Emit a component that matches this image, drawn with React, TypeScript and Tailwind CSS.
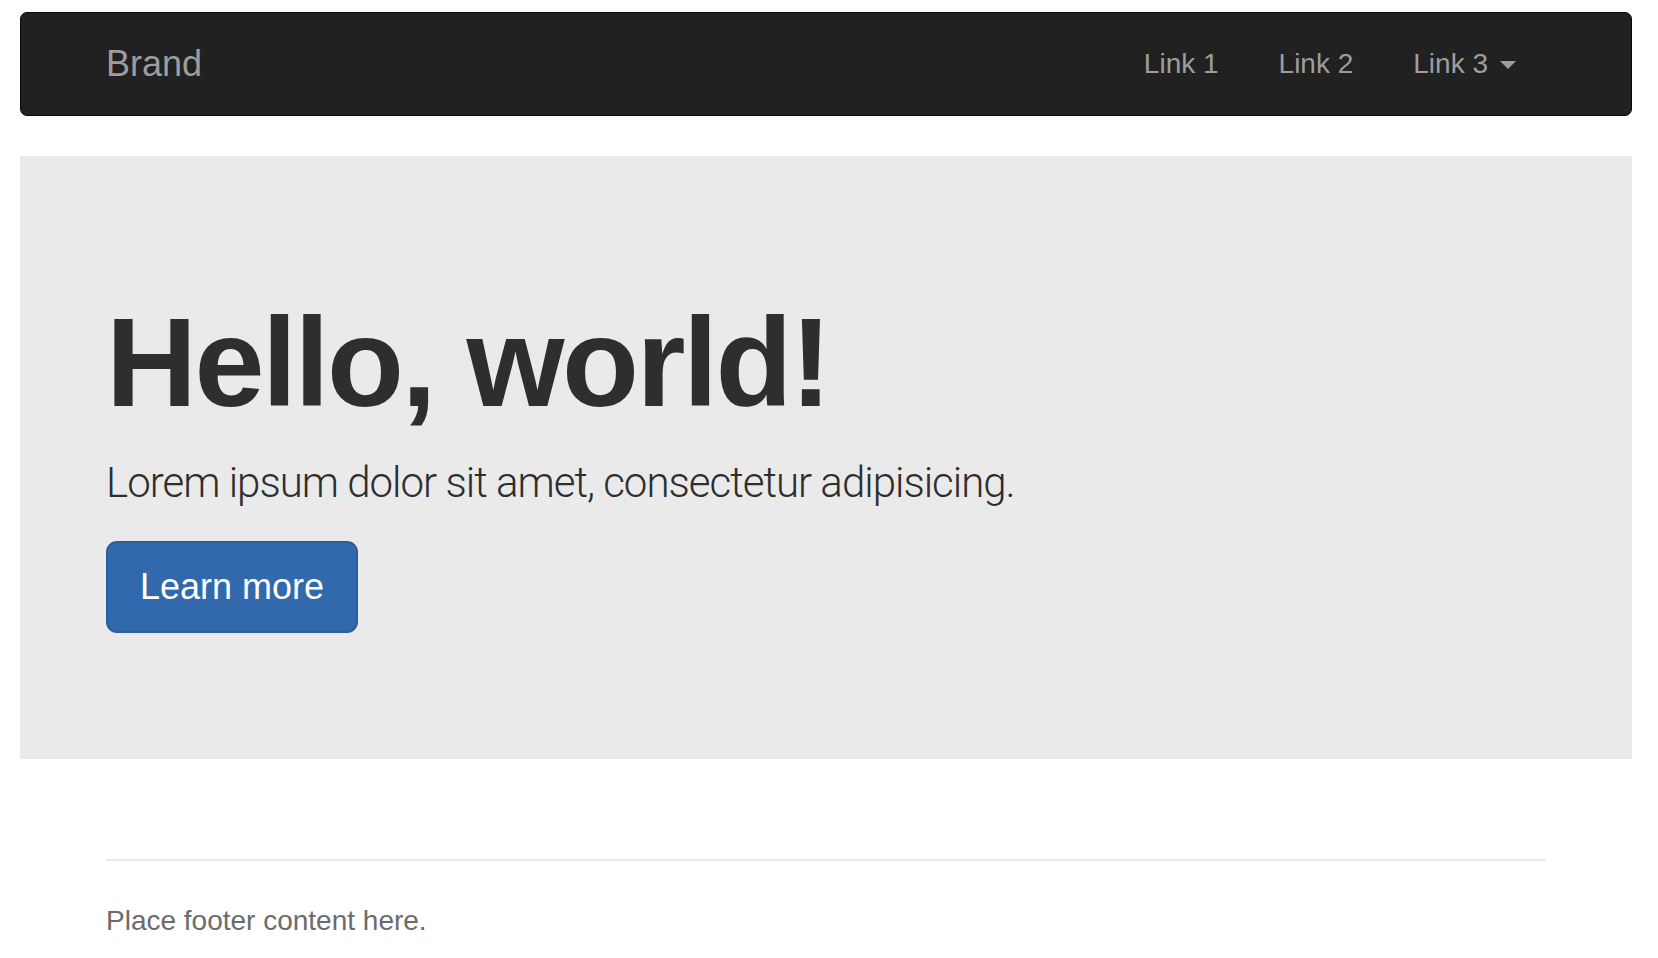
import { useState } from 'react'

const links = ['Link 1', 'Link 2']

function Navbar() {
  const [open, setOpen] = useState(false)

  return (
    <nav className="rounded-[7px] border border-[#080808] bg-[#212121]">
      <div className="mx-auto flex w-[1440px] items-center justify-between">
        <a href="#" className="block pt-[31px] pb-[31px] text-[36px] leading-[40px] text-[#9d9d9d]">
          Brand
        </a>
        <ul className="flex" data-open={open}>
          {links.map(l => (
            <li key={l}>
              <a href="#" className="block px-[30px] pt-[31px] pb-[31px] text-[28px] leading-[40px] text-[#9d9d9d]">
                {l}
              </a>
            </li>
          ))}
          <li>
            <button
              type="button"
              onClick={() => setOpen(o => !o)}
              className="flex items-center px-[30px] pt-[31px] pb-[31px] text-[28px] leading-[40px] text-[#9d9d9d]"
            >
              Link 3
              <span className="ml-[12px] mt-[2px] inline-block h-0 w-0 border-x-[8px] border-t-[8px] border-x-transparent border-t-[#9d9d9d]" />
            </button>
          </li>
        </ul>
      </div>
    </nav>
  )
}

export default function App() {
  return (
    <div
      className="min-h-[958px] bg-white pl-[20px] pr-[26px] pt-[12px]"
      style={{ fontFamily: '"Liberation Sans", Arial, sans-serif' }}
    >
      <Navbar />

      {/* Jumbotron */}
      <section className="mt-[40px] bg-[#eaeaea] pt-[96px] pb-[96px]">
        <div className="mx-auto w-[1440px]">
          <h1 className="mt-[42px] mb-[20px] text-[126px] font-bold leading-[1.1] tracking-[-2.5px] text-[#2e2e2e]">
            Hello, world!
          </h1>
          <p
            className="mb-[28px] text-[42px] font-light leading-[60px] tracking-[-1px] text-[#2e2e2e]"
            style={{ fontFamily: 'Roboto, "Liberation Sans", sans-serif' }}
          >
            Lorem ipsum dolor sit amet, consectetur adipisicing.
          </p>
          <div className="mb-[30px]">
            <a
              href="#"
              className="inline-block rounded-[11px] border-2 border-[#2d5f9c] bg-[#3269ac] px-[32px] py-[20px] align-top text-[36px] leading-[48px] text-white"
            >
              Learn more
            </a>
          </div>
        </div>
      </section>

      {/* Footer */}
      <footer className="mx-auto mt-[100px] w-[1440px]">
        <hr className="border-t-2 border-[#eaeaea]" />
        <p className="mt-[40px] text-[28px] leading-[40px] text-[#6b6b6b]">Place footer content here.</p>
      </footer>
    </div>
  )
}
